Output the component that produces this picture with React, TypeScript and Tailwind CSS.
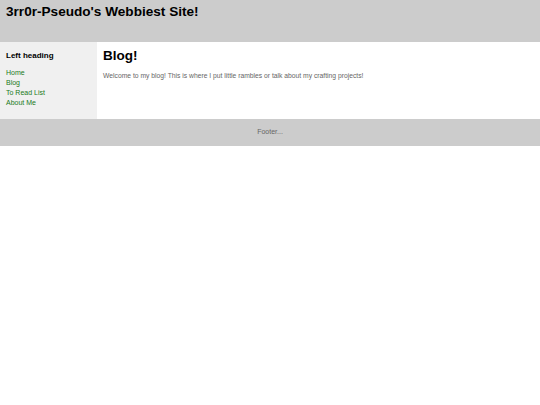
export default function App() {
  return (
    <div className="w-[540px] min-h-[405px] bg-white" style={{ fontFamily: '"Liberation Sans", Arial, sans-serif' }}>
      <header className="h-[42px] bg-[#cccccc] px-[6px] pt-[4px]">
        <h1 className="text-[13.6px] font-bold leading-[16px] text-black">3rr0r-Pseudo's Webbiest Site!</h1>
      </header>
      <div className="flex h-[77px]">
        <aside className="w-[97px] bg-[#f0f0f0] px-[6px] pt-[9px]">
          <h2 className="text-[8px] font-bold leading-[10px] text-black">Left heading</h2>
          <ul className="mt-[7px] text-[7px] leading-[10px] text-[#217a21]">
            <li>Home</li>
            <li>Blog</li>
            <li>To Read List</li>
            <li>About Me</li>
          </ul>
        </aside>
        <main className="flex-1 bg-white px-[6px] pt-[6px]">
          <h2 className="text-[13.5px] font-bold leading-[16px] text-black">Blog!</h2>
          <p className="mt-[7px] text-[6.75px] leading-[9px] text-[#666666]">
            Welcome to my blog! This is where I put little rambles or talk about my crafting projects!
          </p>
        </main>
      </div>
      <footer className="flex h-[27px] items-center justify-center bg-[#cccccc] text-[7px] text-[#666666]">
        Footer...
      </footer>
    </div>
  );
}
